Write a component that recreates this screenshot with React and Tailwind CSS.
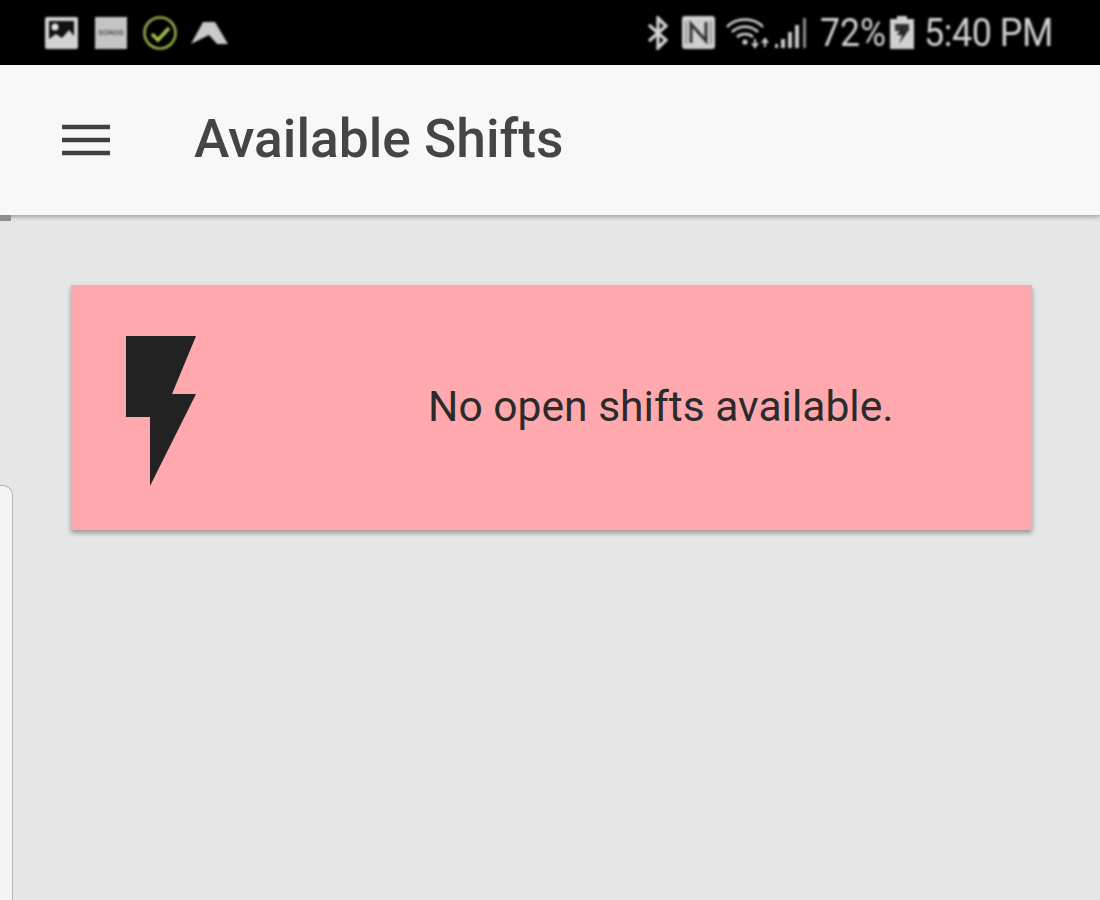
import React from 'react';

const PhotoIcon = () => (
  <svg width="33" height="32" viewBox="0 0 33 32" className="block">
    <rect x="0" y="0" width="33" height="32" rx="2" fill="#d2d2d2" />
    <rect x="4" y="4" width="25" height="23" fill="#111" />
    <circle cx="10" cy="10" r="3.5" fill="#e5e5e5" />
    <path d="M4 27V22L11 17L17 21L24 13L29 19V27Z" fill="#d2d2d2" />
  </svg>
);

const SonosIcon = () => (
  <div className="w-8 h-8 bg-[#c4c4c4] flex items-center justify-center">
    <span className="text-[7px] font-bold text-[#555] leading-none font-['Liberation_Sans',sans-serif]">SONOS</span>
  </div>
);

const CheckIcon = () => (
  <svg width="36" height="36" viewBox="0 0 36 36" className="block">
    <circle cx="18" cy="18" r="15.5" fill="none" stroke="#97ad4f" strokeWidth="2.6" />
    <path d="M10 19L16 25L27 13" fill="none" stroke="#a9c255" strokeWidth="3.4" />
  </svg>
);

const ArrowIcon = () => (
  <svg width="38" height="24" viewBox="0 0 38 24" className="block">
    <path d="M13 1H25L38 23H27L19 14L11 18L1 23Z" fill="#c9c9c9" />
  </svg>
);

const BluetoothIcon = () => (
  <svg width="22" height="34" viewBox="0 0 22 34" className="block">
    <path d="M2 9L19 24L11 32V2L19 10L2 25" fill="none" stroke="#d4d4d4" strokeWidth="3.2" />
  </svg>
);

const NfcIcon = () => (
  <svg width="33" height="33" viewBox="0 0 33 33" className="block">
    <rect x="0" y="0" width="33" height="33" rx="3" fill="#cfcfcf" />
    <path d="M9 27V8L24 25V6" fill="none" stroke="#333" strokeWidth="3" />
    <path d="M4 5V28M29 5V28" stroke="#888" strokeWidth="1.5" />
  </svg>
);

const WifiIcon = () => (
  <svg width="44" height="32" viewBox="0 0 44 32" className="block">
    <path d="M1 10C10 0 28 0 37 10" fill="none" stroke="#d0d0d0" strokeWidth="2.6" />
    <path d="M6 15C13 8 25 8 32 15" fill="none" stroke="#d0d0d0" strokeWidth="2.6" />
    <path d="M11 20C15 16 23 16 27 20" fill="none" stroke="#d0d0d0" strokeWidth="2.6" />
    <circle cx="19" cy="25" r="2.6" fill="#d0d0d0" />
    <path d="M29 22V29M26 26L29 30L32 26" fill="none" stroke="#d0d0d0" strokeWidth="2" />
    <path d="M39 30V23M36 26L39 22L42 26" fill="none" stroke="#d0d0d0" strokeWidth="2" />
  </svg>
);

const SignalIcon = () => (
  <svg width="32" height="32" viewBox="0 0 32 32" className="block">
    <rect x="0" y="27" width="3" height="4" fill="#c8c8c8" />
    <rect x="6" y="22" width="4" height="9" fill="#c8c8c8" />
    <rect x="13" y="15" width="4" height="16" fill="#c8c8c8" />
    <rect x="20" y="8" width="4" height="23" fill="#c8c8c8" />
    <rect x="28" y="1" width="3" height="30" fill="#8a8a8a" />
  </svg>
);

const BatteryIcon = () => (
  <svg width="24" height="33" viewBox="0 0 24 33" className="block">
    <path d="M7 0H17V3H24V33H0V3H7Z" fill="#d0d0d0" />
    <path d="M5 8H19V15H5Z" fill="#333" />
    <path d="M14 8L7 19H12L9 28L18 15H13Z" fill="#222" />
  </svg>
);

const MenuIcon = () => (
  <svg width="50" height="32" viewBox="0 0 50 32" className="block">
    <path d="M1 3H49M1 16H49M1 29H49" stroke="#3f3f3f" strokeWidth="4.5" />
  </svg>
);

const App = () => {
  return (
    <div className="relative w-[1100px] h-[900px] overflow-hidden bg-[#e6e6e6] font-['Roboto',sans-serif]">
      {/* status bar */}
      <div className="h-[65px] bg-black">
        <div className="h-full flex items-center justify-between pl-[45px] pr-[48px] blur-[0.8px]">
          <div className="flex items-center">
            <PhotoIcon />
            <div className="ml-[17px]"><SonosIcon /></div>
            <div className="ml-[15px]"><CheckIcon /></div>
            <div className="ml-[12px]"><ArrowIcon /></div>
          </div>
          <div className="flex items-center text-[#d2d2d2] text-[39px] leading-none">
            <BluetoothIcon />
            <div className="ml-[13px]"><NfcIcon /></div>
            <div className="ml-[11px]"><WifiIcon /></div>
            <div className="ml-[5px]"><SignalIcon /></div>
            <span className="ml-[13px] mt-[2px] w-[64px] whitespace-nowrap scale-x-[0.91] origin-left">72%</span>
            <div className="ml-[6px]"><BatteryIcon /></div>
            <span className="ml-[10px] mt-[2px] w-[128px] whitespace-nowrap tracking-[-0.5px] scale-x-[0.92] origin-left">5:40 PM</span>
          </div>
        </div>
      </div>

      {/* app bar */}
      <div className="h-[150px] bg-[#f8f8f8] flex items-center shadow-[0_2px_4px_rgba(0,0,0,0.3)] relative">
        <div className="ml-[61px]"><MenuIcon /></div>
        <h1 className="ml-[83px] text-[53.3px] font-medium text-[#454545] whitespace-nowrap leading-none">Available Shifts</h1>
      </div>

      {/* content */}
      <div className="pt-[70px] pl-[71px]">
        <div className="w-[961px] h-[245px] bg-[#ffa9ae] shadow-[0_3px_5px_rgba(0,0,0,0.35)] flex items-center">
          <svg width="70" height="151" viewBox="0 0 70 151" className="ml-[55px] mt-[8px] shrink-0">
            <path d="M0 0H70L46 58H70L24 150V81H0Z" fill="#222222" />
          </svg>
          <p className="ml-[232px] -mt-[2px] text-[42.6px] text-[#2b2b2b] whitespace-nowrap leading-none">No open shifts available.</p>
        </div>
      </div>

      {/* edge of a drawer peeking in */}
      <div className="absolute left-0 top-[215px] w-[11px] h-[6px] bg-[#8f8f8f]" />
      <div className="absolute left-0 top-[485px] w-[13px] h-[420px] bg-[#f4f4f4] border-t border-r border-[#b5b5b5] rounded-tr-[10px]" />
    </div>
  );
};

export default App;
